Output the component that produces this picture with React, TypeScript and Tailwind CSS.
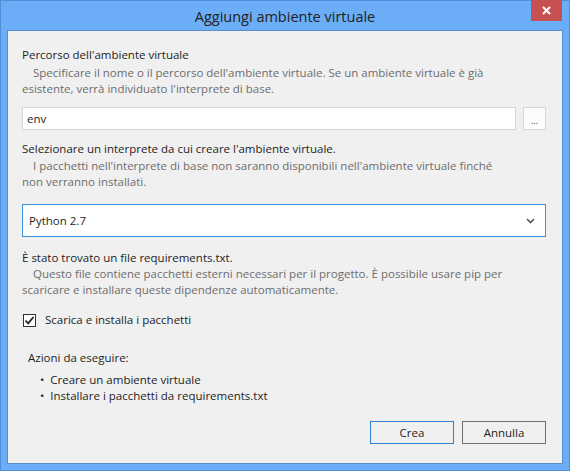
import { useState } from "react";

export default function App() {
  const [install, setInstall] = useState(true);

  return (
    <div className="w-[570px] h-[471px] flex flex-col bg-[#6badf6] border border-[#4f8fd8] font-['Open_Sans',sans-serif] text-[11.5px] leading-[16px] text-[#1e1e1e]">
      {/* Title bar */}
      <div className="relative h-[29px] shrink-0 flex items-center justify-center">
        <span className="text-[14.5px] text-[#222] pt-[2px]">Aggiungi ambiente virtuale</span>
        <button className="absolute top-[-1px] right-[7px] w-[31px] h-[21px] bg-[#c75050] flex items-center justify-center">
          <svg width="9" height="9" viewBox="0 0 9 9">
            <path d="M1 1L8 8M8 1L1 8" stroke="#fff" strokeWidth="2" />
          </svg>
        </button>
      </div>

      {/* Client area */}
      <div className="flex-1 mx-[6px] mb-[6px] border border-[#5b8ccb] bg-[#f0f0f0] flex flex-col pl-[14px] pr-[16px]">
        <div className="mt-[16px]">Percorso dell'ambiente virtuale</div>
        <div className="mt-[2px] text-[#6d6d6d] indent-[11px] whitespace-nowrap">
          Specificare il nome o il percorso dell'ambiente virtuale. Se un ambiente virtuale è già
          <br />
          esistente, verrà individuato l'interprete di base.
        </div>

        <div className="mt-[10px] flex gap-[7px]">
          <div className="flex-1 h-[23px] bg-white border border-[#d5d5e1] flex items-center px-[4px]">
            env
          </div>
          <button className="w-[23px] h-[23px] bg-[#fcfcfc] border border-[#d5d5e1] flex items-end justify-center pb-[4px] text-[9px] leading-none text-[#333]">
            ...
          </button>
        </div>

        <div className="mt-[11px]">Selezionare un interprete da cui creare l'ambiente virtuale.</div>
        <div className="mt-[1px] text-[#6d6d6d] indent-[11px] whitespace-nowrap">
          I pacchetti nell'interprete di base non saranno disponibili nell'ambiente virtuale finché
          <br />
          non verranno installati.
        </div>

        <div className="mt-[14px] h-[33px] bg-white border border-[#3b8fd8] flex items-center justify-between pl-[6px] pr-[10px]">
          <span>Python 2.7</span>
          <svg width="9" height="6" viewBox="0 0 9 6">
            <path d="M1 1L4.5 4.5L8 1" stroke="#555" strokeWidth="1.6" fill="none" />
          </svg>
        </div>

        <div className="mt-[13px]">È stato trovato un file requirements.txt.</div>
        <div className="text-[#6d6d6d] indent-[11px] whitespace-nowrap">
          Questo file contiene pacchetti esterni necessari per il progetto. È possibile usare pip per
          <br />
          scaricare e installare queste dipendenze automaticamente.
        </div>

        <label className="mt-[14px] h-[16px] flex items-center gap-[9px] pl-[1px]">
          <span
            onClick={() => setInstall(!install)}
            className="w-[13px] h-[13px] bg-white border border-[#333] flex items-center justify-center"
          >
            {install && (
              <svg width="11" height="11" viewBox="0 0 11 11">
                <path d="M1.5 5.5L4.2 8.3L9.5 2" stroke="#222" strokeWidth="1.8" fill="none" />
              </svg>
            )}
          </span>
          <span>Scarica e installa i pacchetti</span>
        </label>

        <div className="mt-[22px] pl-[6px]">Azioni da eseguire:</div>
        <ul className="mt-[6px] pl-[18px]">
          <li className="flex gap-[6px]">
            <span>•</span>
            <span>Creare un ambiente virtuale</span>
          </li>
          <li className="flex gap-[6px]">
            <span>•</span>
            <span>Installare i pacchetti da requirements.txt</span>
          </li>
        </ul>

        <div className="mt-[17px] flex justify-end gap-[8px]">
          <button className="w-[84px] h-[23px] border border-[#2f80d3] bg-[#f0f0f0]">Crea</button>
          <button className="w-[84px] h-[23px] border border-[#707070] bg-[#f0f0f0]">Annulla</button>
        </div>
      </div>
    </div>
  );
}
